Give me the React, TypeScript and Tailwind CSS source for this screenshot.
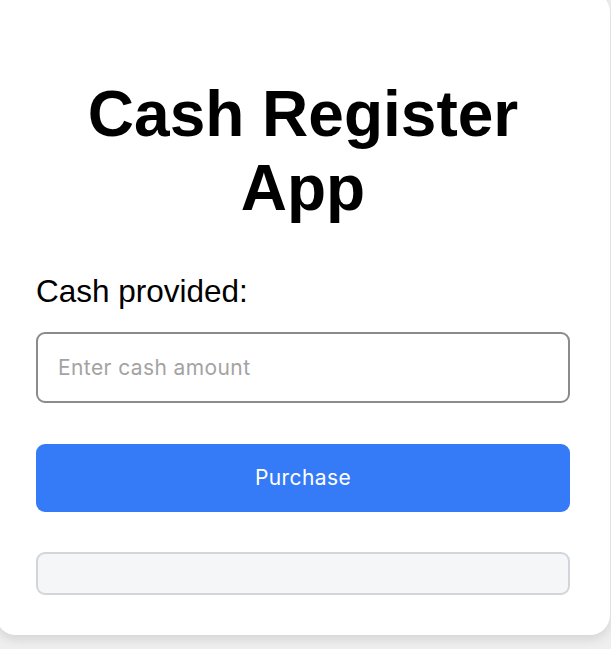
import React from "react";

export default function App() {
  return (
    <div className="min-h-screen w-full overflow-hidden bg-[#efefef]">
      <div className="ml-[-4px] mt-[-8px] w-[614px] rounded-[20px] bg-white px-[40px] pb-[40px] pt-[86px] shadow-[0_4px_12px_rgba(0,0,0,0.12)]">
        <h1 className="text-center text-[64px] font-bold leading-[73.6px] text-black [font-family:'Liberation_Sans',Arial,sans-serif]">
          Cash Register App
        </h1>
        <label
          htmlFor="cash"
          className="mt-[48px] block text-[31.5px] leading-[36px] text-black [font-family:'Liberation_Sans',Arial,sans-serif]"
        >
          Cash provided:
        </label>
        <input
          id="cash"
          type="number"
          placeholder="Enter cash amount"
          className="mt-[23px] block h-[71px] w-full rounded-[9px] border-2 border-[#8b8b8b] bg-white px-[20px] text-[21px] tracking-[0.4px] text-black outline-none placeholder:text-[#a3a3a3] [font-family:Inter,sans-serif]"
        />
        <button className="mt-[41px] block h-[68px] w-full rounded-[9px] bg-[#357af6] text-[21px] tracking-[0.4px] text-white [font-family:Inter,sans-serif]">
          Purchase
        </button>
        <div className="mt-[40px] h-[43px] w-full rounded-[9px] border-2 border-[#d2d5d9] bg-[#f5f6f8]" />
      </div>
    </div>
  );
}
